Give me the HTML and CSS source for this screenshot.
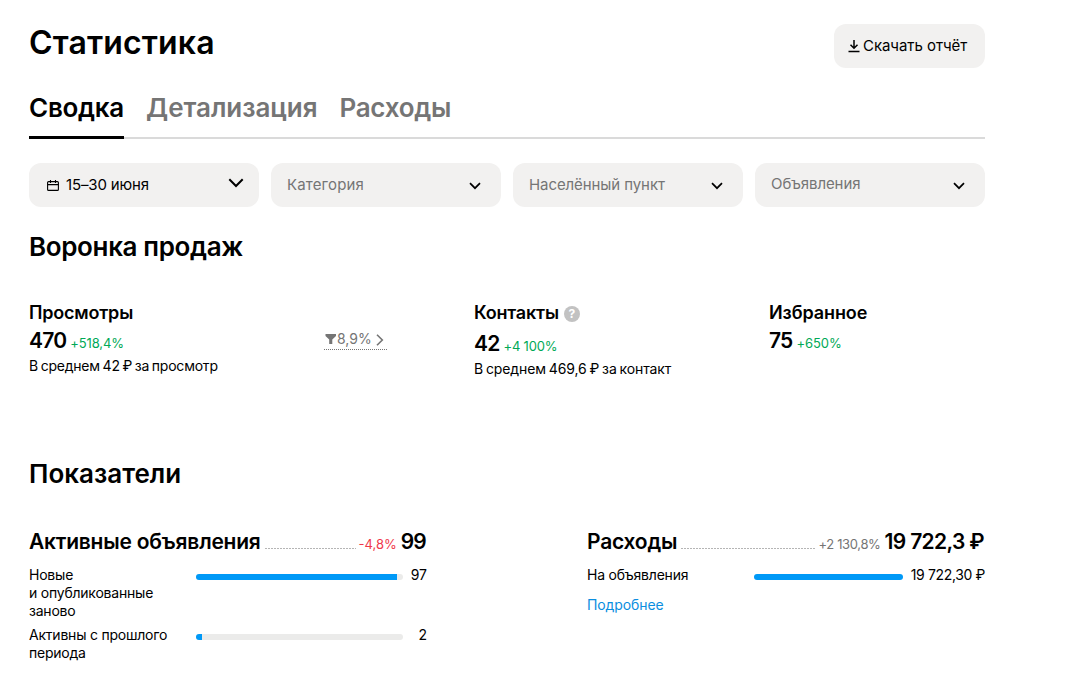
FILE: index.html
```html
<!DOCTYPE html>
<html lang="ru">
<head>
  <meta charset="UTF-8" />
  <meta name="viewport" content="width=device-width, initial-scale=1.0" />
  <title>Статистика</title>
  <link rel="stylesheet" href="styles.css">
</head>
<body>
  <main class="page">
    <header class="header">
      <h1 class="title">Статистика</h1>
      <button class="download">
        <svg width="12" height="14" viewBox="0 0 12 14" fill="none" stroke="#000" stroke-width="1.5">
          <path d="M6 1v8M2.5 5.8L6 9.3l3.5-3.5M.5 12.5h11"/>
        </svg>
        <span>Скачать отчёт</span>
      </button>
    </header>

    <!-- Вкладки -->
    <nav class="tabs">
      <a class="tab tab-active">Сводка</a>
      <a class="tab tab-details">Детализация</a>
      <a class="tab tab-costs">Расходы</a>
    </nav>

    <!-- Фильтры -->
    <div class="filters">
      <div class="filter filter-date">
        <svg class="calendar" width="12" height="11" viewBox="0 0 12 11" fill="none" stroke="#000" stroke-width="1.1">
          <rect x=".6" y="1.6" width="10.8" height="8.8" rx="1"/>
          <path d="M.5 4.6h11M3.5 0v3M8.5 0v3"/>
        </svg>
        <span>15–30 июня</span>
        <svg class="arrow" width="16" height="10" viewBox="0 0 16 10" fill="none" stroke="#000" stroke-width="2">
          <path d="M1.3 1.3L8 8l6.7-6.7"/>
        </svg>
      </div>
      <div class="filter filter-category">
        <span>Категория</span>
        <svg class="arrow" width="12" height="8" viewBox="0 0 12 8" fill="none" stroke="#000" stroke-width="1.7">
          <path d="M1 1.2l5 5 5-5"/>
        </svg>
      </div>
      <div class="filter filter-city">
        <span>Населённый пункт</span>
        <svg class="arrow" width="12" height="8" viewBox="0 0 12 8" fill="none" stroke="#000" stroke-width="1.7">
          <path d="M1 1.2l5 5 5-5"/>
        </svg>
      </div>
      <div class="filter filter-items">
        <span>Объявления</span>
        <svg class="arrow" width="12" height="8" viewBox="0 0 12 8" fill="none" stroke="#000" stroke-width="1.7">
          <path d="M1 1.2l5 5 5-5"/>
        </svg>
      </div>
    </div>

    <!-- Воронка продаж -->
    <h2 class="subtitle subtitle-funnel">Воронка продаж</h2>
    <div class="funnel">
      <div class="metric metric-views">
        <h3>Просмотры</h3>
        <div class="value"><b>470</b><span class="up">+518,4%</span></div>
        <p>В среднем 42 ₽ за просмотр</p>
      </div>
      <div class="conversion">
        <div class="conversion-link">
          <svg width="13" height="12" viewBox="0 0 13 12" fill="#757575"><path d="M1.5 1H12v2L8.3 6.5V11H5.2V6.5L1.5 3z"/></svg>
          <span>8,9%</span>
          <svg class="next" width="8" height="12" viewBox="0 0 8 12" fill="none" stroke="#757575" stroke-width="1.6"><path d="M1 .8L6.3 6 1 11.2"/></svg>
        </div>
      </div>
      <div class="metric metric-contacts">
        <h3>Контакты<i class="help">?</i></h3>
        <div class="value"><b>42</b><span class="up">+4 100%</span></div>
        <p>В среднем 469,6 ₽ за контакт</p>
      </div>
      <div class="metric metric-favorites">
        <h3>Избранное</h3>
        <div class="value"><b>75</b><span class="up">+650%</span></div>
      </div>
    </div>

    <!-- Показатели -->
    <h2 class="subtitle subtitle-stats">Показатели</h2>
    <div class="stats">
      <section class="stat stat-items">
        <div class="stat-head">
          <h3>Активные объявления</h3>
          <div class="dots"></div>
          <span class="diff down">-4,8%</span>
          <b>99</b>
        </div>
        <div class="row">
          <div class="label">Новые<br>и опубликованные<br>заново</div>
          <div class="bar"><div class="fill" style="width: 97.1%"></div></div>
          <div class="count">97</div>
        </div>
        <div class="row">
          <div class="label">Активны с прошлого<br>периода</div>
          <div class="bar"><div class="fill" style="width: 2.9%"></div></div>
          <div class="count">2</div>
        </div>
      </section>
      <section class="stat stat-costs">
        <div class="stat-head">
          <h3>Расходы</h3>
          <div class="dots"></div>
          <span class="diff">+2 130,8%</span>
          <b>19 722,3 ₽</b>
        </div>
        <div class="row">
          <div class="label">На объявления</div>
          <div class="bar"><div class="fill" style="width: 100%"></div></div>
          <div class="count">19 722,30 ₽</div>
        </div>
        <a class="more">Подробнее</a>
      </section>
    </div>
  </main>
</body>
</html>
```

FILE: styles.css
```css
* {
  box-sizing: border-box;
}
body {
  margin: 0;
  font-family: Inter, 'Liberation Sans', sans-serif;
  font-size: 14px;
  line-height: 18px;
  background: #fff;
  color: #000;
}
h1, h2, h3, p {
  margin: 0;
}
.page {
  width: 985px;
  padding: 24px 0 0 29px;
}
.header {
  display: flex;
  justify-content: space-between;
  height: 44px;
}
.title {
  font-size: 32px;
  line-height: 37px;
  font-weight: 600;
  letter-spacing: 0.15px;
}
.download {
  display: flex;
  align-items: center;
  gap: 3px;
  width: 151px;
  height: 44px;
  padding: 0 0 1px 14px;
  border: none;
  border-radius: 12px;
  background: #f2f1f0;
  color: #000;
  font-family: inherit;
  font-size: 15px;
  letter-spacing: -0.05px;
}
.download svg {
  margin-top: 1px;
}
/* Вкладки */
.tabs {
  display: flex;
  gap: 22px;
  margin-top: 24px;
  box-shadow: inset 0 -2px #dadada;
}
.tab {
  padding-bottom: 13px;
  border-bottom: 3px solid transparent;
  color: #757575;
  font-size: 26px;
  line-height: 31px;
  font-weight: 600;
  letter-spacing: -0.27px;
}
.tab-active {
  border-color: #000;
  color: #000;
}
.tab-details {
  letter-spacing: -0.05px;
}
/* Фильтры */
.filters {
  display: grid;
  grid-template-columns: repeat(4, 230px);
  gap: 12px;
  margin-top: 24px;
}
.filter {
  display: flex;
  align-items: center;
  height: 44px;
  padding: 0 20px 0 16px;
  border-radius: 12px;
  background: #f2f1f0;
  color: #757575;
  font-size: 15px;
  letter-spacing: -0.08px;
}
.filter-date {
  padding: 0 15px 0 18px;
  color: #000;
  letter-spacing: -0.15px;
}
.filter-category {
  letter-spacing: 0.15px;
}
.filter-items span {
  padding-bottom: 2px;
}
.calendar {
  margin: 0 7px 0 0;
}
.arrow {
  margin: 1px 0 0 auto;
}
.filter-date .arrow {
  margin: 0 0 4px auto;
}
.subtitle {
  font-size: 26px;
  line-height: 32px;
  font-weight: 600;
}
.subtitle-funnel {
  margin-top: 24px;
  letter-spacing: -0.36px;
}
/* Воронка */
.funnel {
  display: grid;
  grid-template-columns: 295px 150px 295px auto;
  height: 157px;
  padding-top: 37px;
}
.metric h3 {
  display: flex;
  align-items: center;
  height: 27px;
  padding-bottom: 1px;
  font-size: 18px;
  line-height: 24px;
  font-weight: 600;
  letter-spacing: -0.2px;
}
.value {
  display: flex;
  align-items: baseline;
  gap: 4px;
  height: 28px;
  line-height: 28px;
}
.value b {
  font-size: 21px;
  font-weight: 600;
  letter-spacing: -0.8px;
}
.metric p {
  margin-top: 2px;
  word-spacing: -1px;
}
.metric-views p {
  letter-spacing: -0.22px;
}
.metric-contacts p {
  letter-spacing: -0.1px;
}
.metric-favorites h3 {
  letter-spacing: -0.1px;
}
.metric-contacts h3 {
  height: 30px;
  padding-bottom: 4px;
}
.up {
  color: #00a956;
  font-size: 13px;
  letter-spacing: -0.1px;
}
.metric-contacts .up {
  letter-spacing: -0.2px;
}
.help {
  width: 16px;
  height: 16px;
  margin: 2px 0 0 5px;
  border-radius: 50%;
  background: #c2c2c2;
  color: #fff;
  font-size: 12px;
  line-height: 16px;
  font-style: normal;
  font-weight: 700;
  text-align: center;
}
.conversion-link {
  display: flex;
  align-items: center;
  width: 63px;
  height: 20px;
  margin-top: 30px;
  padding-bottom: 1px;
  border-bottom: 1px dotted #757575;
  color: #757575;
}
.next {
  margin: 2px 0 0 4px;
}
/* Показатели */
.subtitle-stats {
  margin-top: 38px;
}
.stats {
  display: flex;
  justify-content: space-between;
  margin-top: 38px;
}
.stat {
  width: 398px;
}
.stat-head {
  display: flex;
  align-items: baseline;
  height: 28px;
  margin-bottom: 10px;
  font-size: 21px;
  line-height: 28px;
}
.stat-head h3 {
  font-size: 21px;
  font-weight: 600;
  letter-spacing: -0.22px;
}
.stat-head b {
  font-weight: 600;
  letter-spacing: -0.8px;
  margin-right: 1px;
}
.stat-costs .stat-head b {
  letter-spacing: -0.65px;
}
.dots {
  flex: 1;
  height: 1px;
  margin: 0 3px 0 4px;
  background: repeating-linear-gradient(90deg, #b5b5b5 0 2px, transparent 2px 3px);
}
.diff {
  margin-right: 4px;
  color: #757575;
  font-size: 13px;
  letter-spacing: -0.35px;
}
.down {
  color: #f0384b;
  letter-spacing: 0;
}
.row {
  display: flex;
  margin-bottom: 6px;
}
.label {
  width: 167px;
  letter-spacing: -0.22px;
}
.bar {
  flex: 1;
  height: 6px;
  margin-top: 8px;
  border-radius: 3px;
  background: #ebebea;
  overflow: hidden;
}
.fill {
  height: 6px;
  background: #0099f7;
}
.count {
  width: 24px;
  text-align: right;
}
.stat-costs .count {
  width: 82px;
  letter-spacing: -0.36px;
}
.more {
  display: block;
  margin-top: 12px;
  color: #0b8ee0;
  letter-spacing: -0.1px;
}
```
